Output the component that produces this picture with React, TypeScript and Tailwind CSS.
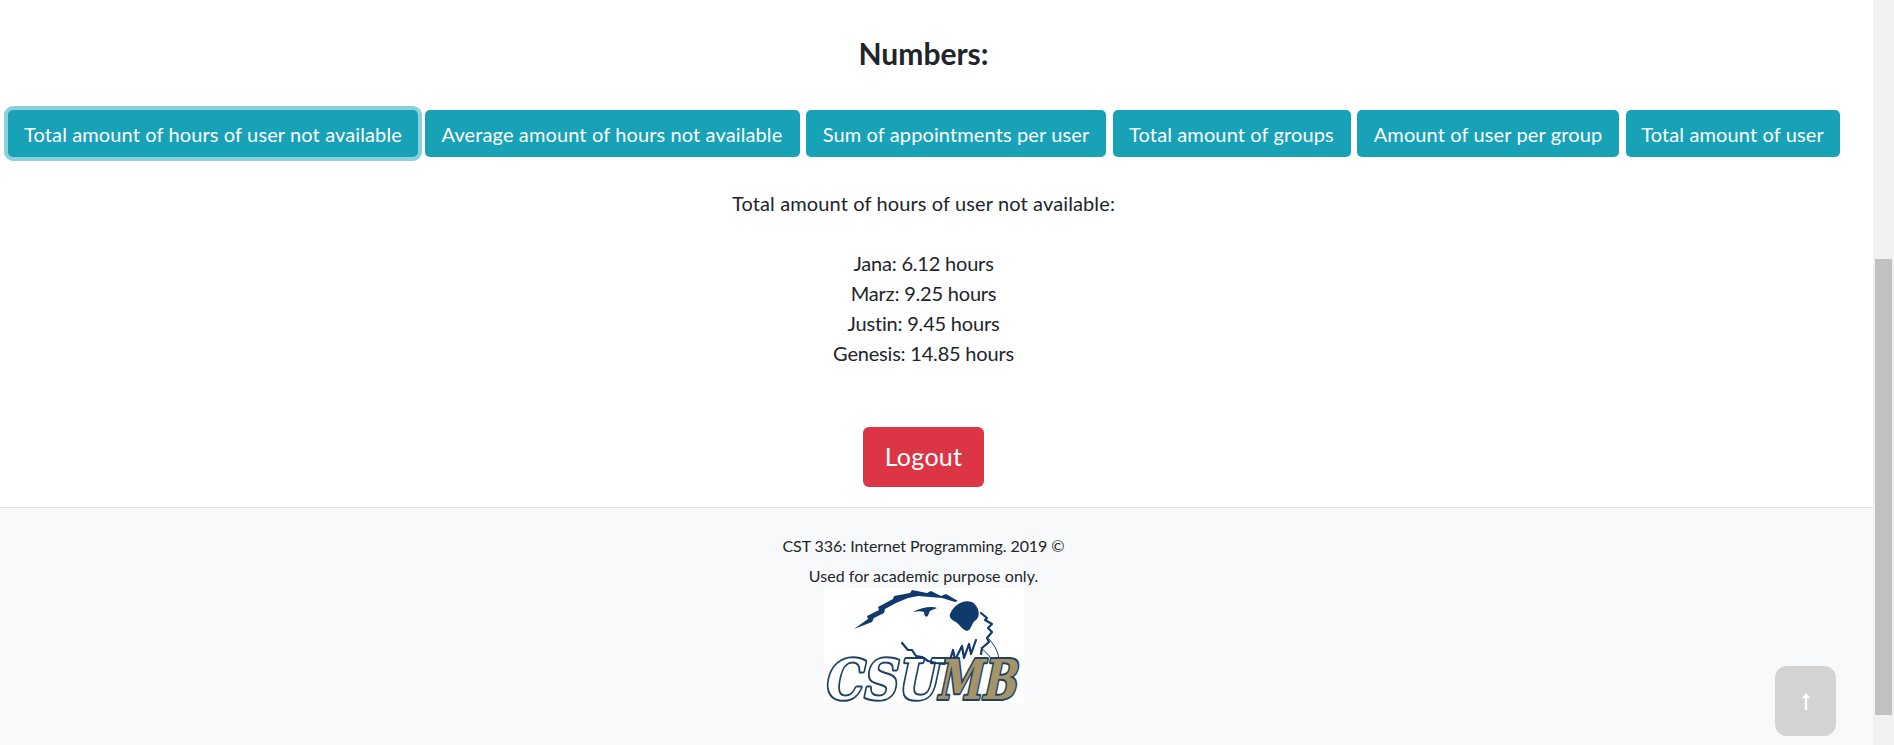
import React from "react";

const font = { fontFamily: 'Lato, "Noto Sans", "Liberation Sans", sans-serif' };

const buttons = [
  { t: "Total amount of hours of user not available", w: "w-[410px] shadow-[0_0_0_4px_rgba(23,162,184,0.5)]" },
  { t: "Average amount of hours not available", w: "w-[375px]" },
  { t: "Sum of appointments per user", w: "w-[300px]" },
  { t: "Total amount of groups", w: "w-[238px]" },
  { t: "Amount of user per group", w: "w-[262px]" },
  { t: "Total amount of user", w: "w-[214px]" },
];

const logoFont = '"DejaVu Serif", "Liberation Serif", serif';

function Logo() {
  return (
    <svg width="200" height="115" viewBox="0 0 200 115" className="block overflow-visible bg-white">
      <g transform="translate(0 111) skewX(-12)">
        <text x="-1" y="0" fontFamily={logoFont} fontWeight="700" fontSize="55" fill="#ffffff" stroke="#1f4262" strokeWidth="4" strokeLinejoin="round" paintOrder="stroke" textLength="114" lengthAdjust="spacingAndGlyphs">CSU</text>
      </g>
      <g fill="#0f3a6b">
        <path d="M30 41 L44 31 L43 28 L55 22 L54 19 L69 11 L70 8 L86 5 L88 2 L103 5 L107 3 L117 8 L122 6 L134 13 L131 14 L118 10 L106 9 L94 8 L84 10 L72 15 L61 21 L60 25 L50 30 L48 34 Z" />
        <path d="M89 24 C98 19 108 18 113 20 C108 22 106 22 105 25 C104 30 100 30 100 24 C97 23 95 23 89 24 Z" />
        <path d="M126 26 C130 16 140 11 148 14 C155 18 157 28 152 32 C147 35 148 42 143 43 C138 42 135 35 130 33 C127 31 125 29 126 26 Z" />
      </g>
      <g fill="none" stroke="#0f3a6b" strokeLinecap="round" strokeLinejoin="round">
        <path d="M157 25 L163 30 L161 32 L168 36 L164 40 L168 44 L163 50 L165 54 L158 60 L157 66" strokeWidth="2.2" />
        <path d="M78 55 L84 62 L88 62 L92 68 L98 69 L104 73 L112 75 L120 76 L126 72 L129 62 L131 72 L138 58 L140 70 L145 56 L147 66 L152 52" strokeWidth="2.2" />
        <path d="M165 51 C171 58 175 64 175 74" strokeWidth="1" />
        <path d="M157 60 C164 66 168 70 169 76" strokeWidth="1" />
      </g>
      <g transform="translate(0 111) skewX(-12)">
        <text x="112" y="0" fontFamily={logoFont} fontWeight="700" fontSize="55" fill="#a5946a" stroke="#1f4262" strokeWidth="4" strokeLinejoin="round" paintOrder="stroke" textLength="79" lengthAdjust="spacingAndGlyphs">MB</text>
      </g>
    </svg>
  );
}

export default function App() {
  return (
    <div className="relative flex h-[745px] w-[1894px] overflow-hidden bg-white text-[#212529]" style={font}>
      <div className="flex w-[1873px] flex-col">
        <main className="flex h-[507px] w-[1847px] flex-col items-center">
          <h2 className="mt-[35px] text-[30px] font-bold leading-[36px]">Numbers:</h2>
          <div className="mt-[39px] flex gap-[6.5px] self-start pl-[8px]">
            {buttons.map((b) => (
              <button
                key={b.t}
                className={`h-[47px] rounded-[5px] bg-[#17a2b8] text-[20px] tracking-[0.12px] text-white ${b.w}`}
              >
                {b.t}
              </button>
            ))}
          </div>
          <p className="mt-[31px] text-[20px] leading-[30px] tracking-[0.12px]">Total amount of hours of user not available:</p>
          <div className="mt-[30px] flex flex-col items-center text-[20px] leading-[30px] tracking-[-0.2px]">
            <span>Jana: 6.12 hours</span>
            <span>Marz: 9.25 hours</span>
            <span>Justin: 9.45 hours</span>
            <span>Genesis: 14.85 hours</span>
          </div>
          <button className="mt-[59px] h-[60px] w-[121px] rounded-[6px] bg-[#dc3545] text-[25px] tracking-[0.3px] text-white">Logout</button>
        </main>
        <footer className="flex flex-1 flex-col border-t border-[#dddddd] bg-[#f8f9fa]">
          <div className="flex w-[1847px] flex-col items-center pt-[26px] text-[16px] leading-[24px]">
            <p className="tracking-[-0.06px]">CST 336: Internet Programming. 2019 ©</p>
            <p className="mt-[6px] tracking-[0.05px]">Used for academic purpose only.</p>
            <Logo />
          </div>
        </footer>
      </div>
      <div className="flex w-[21px] flex-col bg-[#f1f1f1] pl-[2px] pr-[2px] pt-[259px]">
        <div className="h-[456px] bg-[#c1c1c1]" />
      </div>
      <button className="absolute left-[1775px] top-[666px] flex h-[70px] w-[61px] items-center justify-center rounded-[12px] bg-[#d3d3d3]">
        <svg width="10" height="17" viewBox="0 0 10 17" fill="#ffffff">
          <path d="M5 0 L9.5 5.5 L6.2 5 L6.2 17 L3.8 17 L3.8 5 L0.5 5.5 Z" />
        </svg>
      </button>
    </div>
  );
}
